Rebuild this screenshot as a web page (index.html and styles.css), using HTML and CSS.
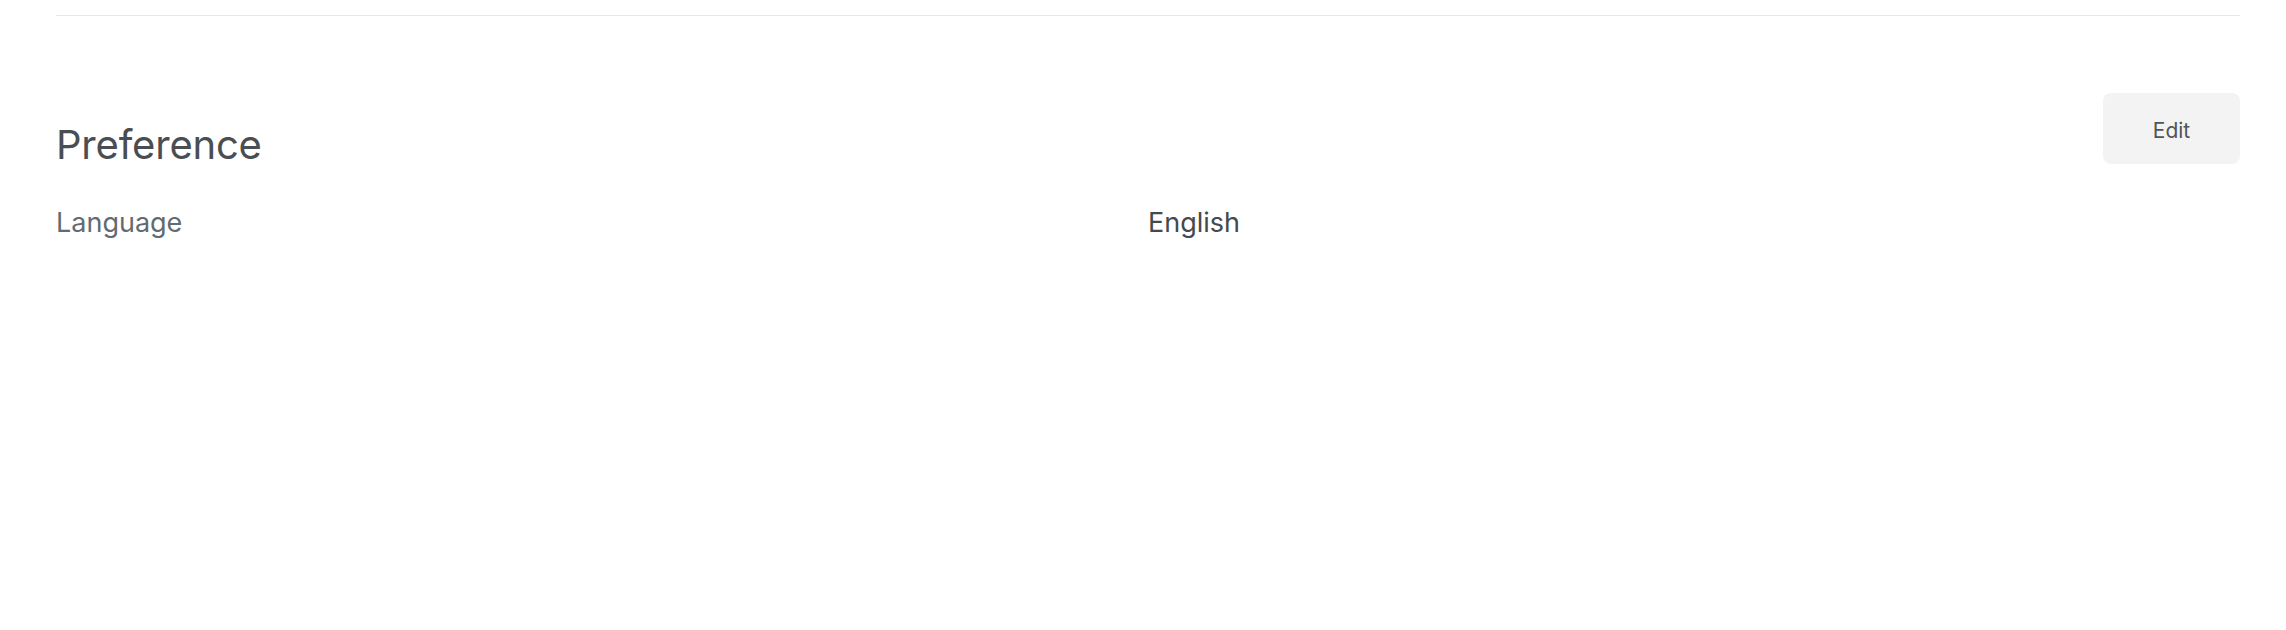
FILE: index.html
```html
<!DOCTYPE html>
<html lang="en">
<head>
<meta charset="utf-8">
<title>Preference</title>
<link rel="stylesheet" href="styles.css">
</head>
<body>
<div class="page">
  <hr class="divider">
  <section class="section">
    <div class="section-head">
      <h2 class="section-title">Preference</h2>
      <button class="btn-edit" type="button">Edit</button>
    </div>
    <div class="row">
      <div class="label">Language</div>
      <div class="value">English</div>
    </div>
  </section>
</div>
</body>
</html>
```
FILE: styles.css
```css
html, body {
  margin: 0;
  padding: 0;
  background: #ffffff;
}
body {
  font-family: Inter, "Noto Sans", "Liberation Sans", sans-serif;
}
.page {
  padding: 15px 46px 0 56px;
}
.divider {
  border: 0;
  border-top: 1px solid #e6e6e6;
  margin: 0;
}
.section {
  margin-top: 77px;
}
.section-head {
  display: flex;
  justify-content: space-between;
  align-items: flex-start;
}
.section-title {
  margin: 28px 0 0 0;
  font-size: 40px;
  line-height: 48px;
  font-weight: 400;
  color: #4a4e52;
  letter-spacing: -0.2px;
}
.btn-edit {
  width: 137px;
  height: 71px;
  border: 0;
  border-radius: 8px;
  background: #f3f3f3;
  color: #505558;
  font-family: inherit;
  font-size: 21px;
  padding: 4px 0 0 0;
}
.row {
  display: grid;
  grid-template-columns: 1fr 1fr;
  margin-top: 34px;
}
.label {
  font-size: 27px;
  line-height: 40px;
  color: #616b70;
}
.value {
  font-size: 27px;
  line-height: 40px;
  color: #45494d;
}
```
